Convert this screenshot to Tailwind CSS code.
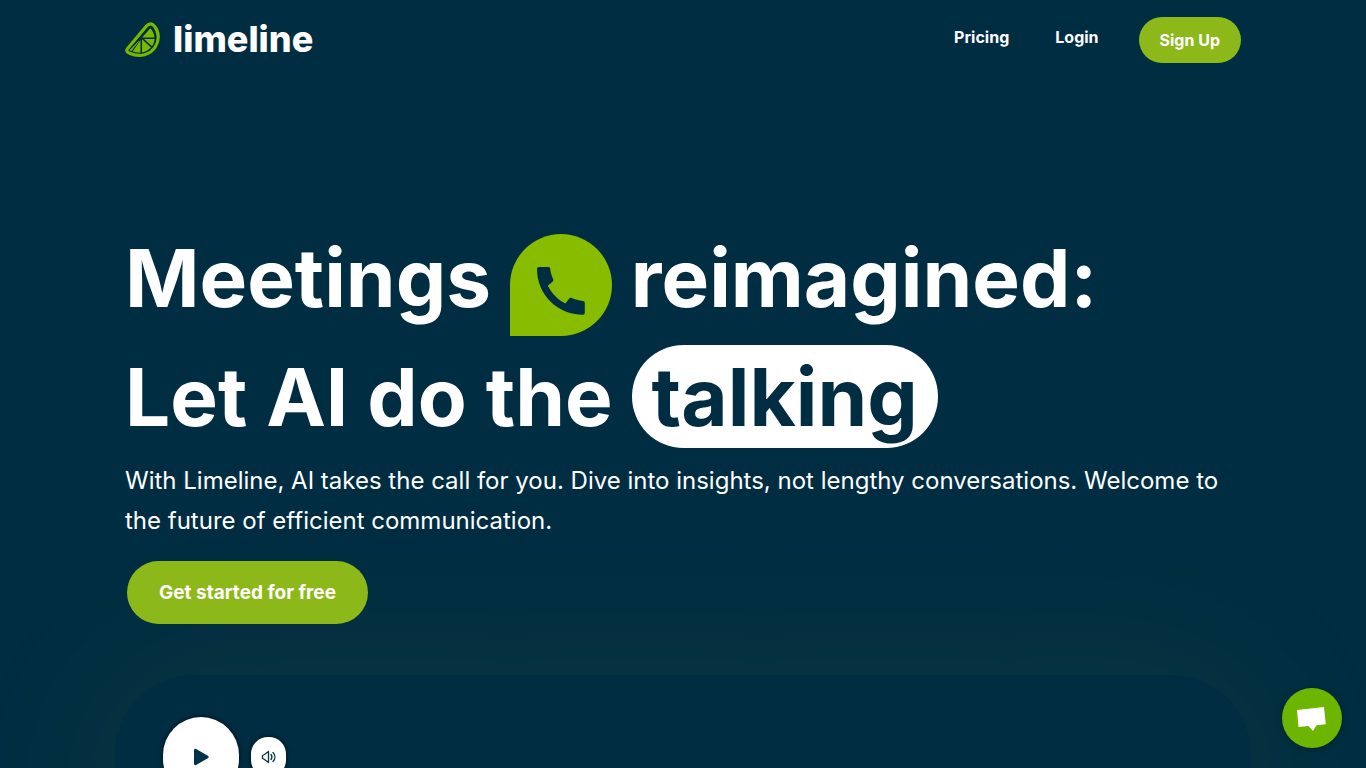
<!DOCTYPE html>
<html lang="en">
  <head>
    <meta charset="UTF-8" />
    <meta name="viewport" content="width=device-width, initial-scale=1.0" />
    <title>Limeline</title>
    <script src="https://cdn.jsdelivr.net/npm/@tailwindcss/browser@4"></script>
  </head>
  <body class="h-screen overflow-hidden bg-[#002d42] font-['Inter',sans-serif] text-white">
    <!-- Header -->
    <header class="mx-auto flex h-20 max-w-[1140px] items-center justify-between px-3">
      <a href="#" class="flex items-center gap-3" aria-label="limeline home">
        <svg class="size-9" viewBox="0 0 36 36" fill="none" aria-hidden="true">
          <path d="M2.600 26.500 21.500 4C24 1.200 27.200 1.300 29.500 4.200 34.200 10 34.400 18 30.500 24.500 25.500 33 15 35.600 4.500 31.300 1.800 30.200 1 28.400 2.600 26.500Z" stroke="#7ab800" stroke-width="3.2" />
          <path d="M17.200 15.600 25.300 6.200C27.700 8.700 29.200 11.900 29.500 15.600Z" fill="#7ab800" />
          <path d="M19 17H29.600C29.400 19.700 28.500 22.200 27 24.300Z" fill="#7ab800" />
          <path d="M17 17.200 26 25.600C23.500 28.300 20.400 29.900 17 30.400Z" fill="#7ab800" />
          <path d="M15.500 18V30.600C12.700 30.800 10.200 30.500 7.700 29.600Z" fill="#7ab800" />
          <path d="M13.800 19.200 6.200 29 4.800 28.300Z" fill="#7ab800" stroke="#7ab800" stroke-width=".6" />
        </svg>
        <span class="pb-0.5 text-4xl font-extrabold">limeline</span>
      </a>
      <nav class="flex items-center gap-10 font-bold">
        <a href="#" class="pb-1.5">Pricing</a>
        <a href="#" class="ml-1.5 pb-1.5">Login</a>
        <a href="#" class="rounded-full bg-[#8cb919] px-[21px] py-[11px]">Sign Up</a>
      </nav>
    </header>

    <main>
      <!-- Hero -->
      <section class="relative z-10 mx-auto max-w-[1140px] px-3 pt-[138px]">
        <h1 class="text-[80px] leading-[119px] font-bold">
          Meetings
          <span class="inline-flex size-[102px] items-center justify-center rounded-full rounded-bl-none bg-[#88bc00] align-middle">
            <svg class="mt-3 size-12" viewBox="0 0 48 48" fill="#002d42" aria-hidden="true">
              <path d="M2 0H11.500Q13 0 13.200 1.500C13.600 5.500 14.600 8.800 16.200 12.200Q16.700 13.500 15.800 14.400L10.800 18.800C14.800 26.600 20.600 32.500 28.500 36.600L32.200 31.400Q33 30.300 34.300 30.800C38 32.500 41.800 33.600 46 34Q47.800 34.200 47.800 36V46Q47.800 47.800 46 47.800C20.500 47.800 0 27.500 0 2Q0 0 2 0Z" />
            </svg>
          </span>
          reimagined:<br />
          Let AI do the
          <span class="rounded-full bg-white px-5 py-[3px] text-[#002d42]">talking</span>
        </h1>
        <p class="mt-[5px] text-2xl leading-10 font-normal">
          With Limeline, AI takes the call for you. Dive into insights, not lengthy conversations. Welcome to the future of efficient communication.
        </p>
        <button class="mt-5 ml-0.5 rounded-full bg-[#8cb919] px-8 py-[18px] text-[19px] leading-[27px] font-bold">
          Get started for free
        </button>
      </section>

      <!-- Audio player -->
      <section class="mx-auto mt-[51px] h-60 max-w-[1136px] rounded-[80px] bg-[#002d42] px-12 py-[42px] shadow-[0_0_160px_20px_rgba(140,185,25,0.07)]">
        <div class="flex items-center gap-3">
          <button aria-label="Play" class="flex h-20 w-[76px] items-center justify-center rounded-[38px] bg-white shadow-[0_0_5px_rgba(0,0,0,0.7)]">
            <svg class="size-5" viewBox="0 0 20 20" fill="#003349" aria-hidden="true">
              <path d="M3 3.500c0-1.400 1-2 2.200-1.400l11.600 6.600c1.200.700 1.200 1.900 0 2.600L5.200 17.900C4 18.500 3 17.900 3 16.500Z" />
            </svg>
          </button>
          <button aria-label="Volume" class="flex h-10 w-[35px] items-center justify-center rounded-[17px] bg-white shadow-[0_0_5px_rgba(0,0,0,0.7)]">
            <svg class="size-4" viewBox="0 0 16 16" fill="none" stroke="#003349" stroke-width="1.300" stroke-linecap="round" stroke-linejoin="round" aria-hidden="true">
              <path d="M1.500 6.500 3.500 5.500 7.500 2.500V13.500L3.500 10.500 1.500 9.500Z" />
              <path d="M10 5.500c1.200 1.500 1.200 3.500 0 5M12 3.500c2.600 2.700 2.600 6.300 0 9" />
            </svg>
          </button>
        </div>
      </section>
    </main>

    <!-- Chat launcher -->
    <button aria-label="Open chat" class="fixed right-6 bottom-5 z-20 flex size-[60px] items-center justify-center rounded-full bg-[#6cb500] shadow-[0_1px_6px_rgba(0,0,0,0.3)]">
      <svg class="size-[60px]" viewBox="0 0 60 60" fill="#fff" aria-hidden="true">
        <path d="M15 22 42 19 43.800 36.200 34.500 37.200 31 43 26.500 38 16.500 39Z" />
      </svg>
    </button>
  </body>
</html>
